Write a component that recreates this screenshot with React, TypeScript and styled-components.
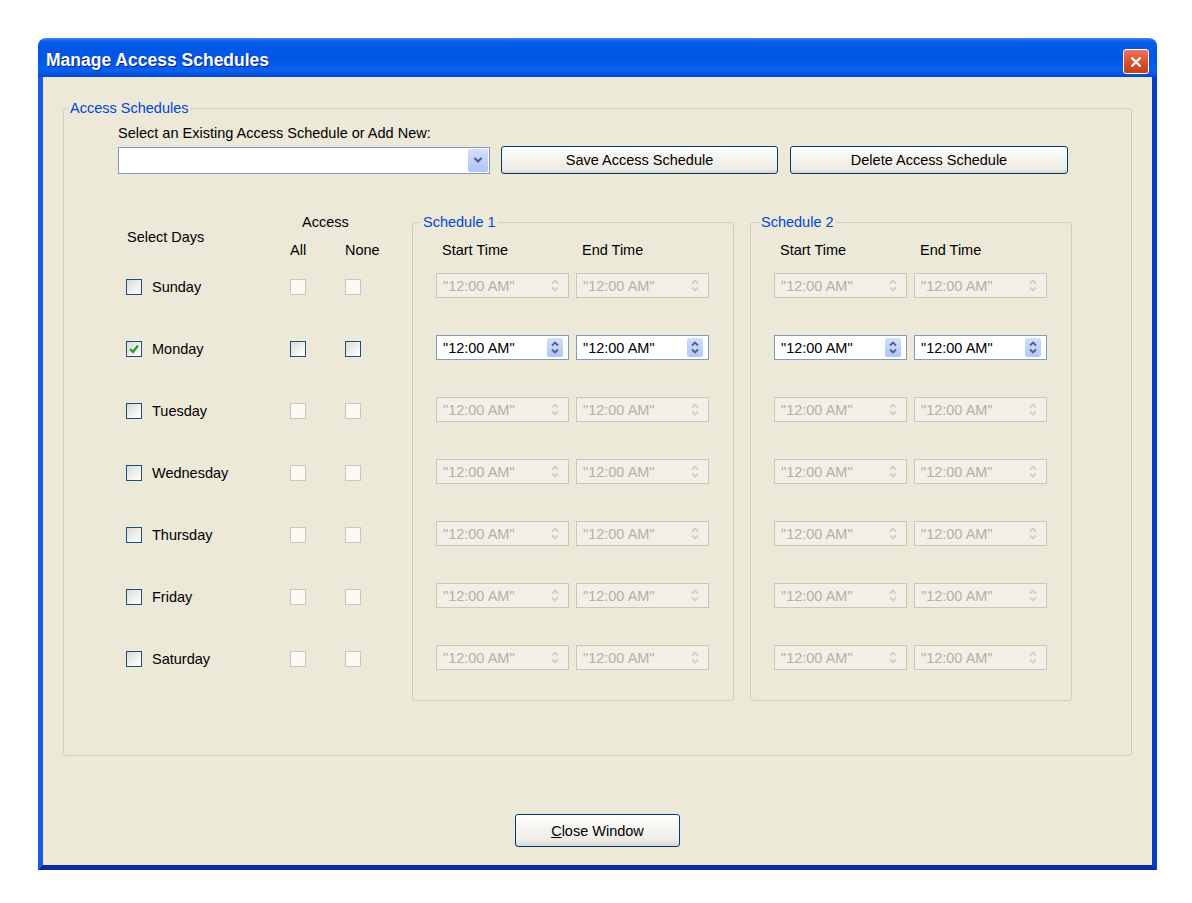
import React from "react";
import styled, { createGlobalStyle } from "styled-components";

const GlobalStyle = createGlobalStyle`
  html, body {
    margin: 0;
    padding: 0;
    background: #ffffff;
  }
  body {
    font-family: "Liberation Sans", Arial, sans-serif;
    font-size: 14.5px;
    color: #000;
  }
`;

const days = ["Sunday", "Monday", "Tuesday", "Wednesday", "Thursday", "Friday", "Saturday"];
const activeDay = "Monday";

const Page = styled.div`
  width: 1192px;
  height: 903px;
  padding: 38px 0 0 38px;
  box-sizing: border-box;
`;

const Window = styled.div`
  width: 1119px;
  height: 832px;
  display: flex;
  flex-direction: column;
  border-radius: 8px 8px 0 0;
  overflow: hidden;
`;

const TitleBar = styled.div`
  height: 39px;
  flex: none;
  display: flex;
  align-items: center;
  justify-content: space-between;
  padding: 5px 8px 0 8px;
  box-sizing: border-box;
  background: linear-gradient(
    180deg,
    #3d8ef8 0px,
    #0a5fe8 3px,
    #0157e6 10px,
    #0356e5 55%,
    #0862ef 82%,
    #0455e0 92%,
    #0a43c8 100%
  );
`;

const Title = styled.span`
  color: #fff;
  font-weight: bold;
  font-size: 17.5px;
  line-height: 20px;
  text-shadow: 1px 1px 0 #0a1e8c;
`;

const CloseBox = styled.span`
  width: 26px;
  height: 25px;
  box-sizing: border-box;
  border: 1px solid #fff;
  border-radius: 3px;
  background: linear-gradient(180deg, #e8775b 0%, #d8512f 55%, #c43e1c 100%);
  display: flex;
  align-items: center;
  justify-content: center;
  margin-top: 3px;
`;

const Body = styled.div`
  flex: 1;
  display: flex;
  flex-direction: column;
  align-items: stretch;
  background: #ece9d8;
  border-left: 5px solid #1a5ae0;
  border-right: 5px solid #0b3cc7;
  border-bottom: 5px solid #0a2aa6;
`;

const GroupBox = styled.fieldset<{ $height: number; $width?: number }>`
  margin: 0;
  padding: 0;
  min-width: 0;
  box-sizing: border-box;
  height: ${(p) => p.$height}px;
  ${(p) => (p.$width ? `width: ${p.$width}px;` : "")}
  border: 1px solid #d0d0bf;
  border-radius: 3px;
`;

const GroupLegend = styled.legend<{ $offset: number }>`
  margin-left: ${(p) => p.$offset}px;
  padding: 0 2px;
  color: #0046d5;
  font-size: 14.5px;
  line-height: 16px;
`;

const MainGroup = styled(GroupBox)`
  margin: 23px 20px 0 20px;
`;

const MainContent = styled.div`
  padding: 9px 0 0 54px;
`;

const Label = styled.div`
  line-height: 16px;
  white-space: nowrap;
`;

const ControlRow = styled.div`
  display: flex;
  align-items: center;
  height: 28px;
  margin-top: 5px;
`;

const Combo = styled.div`
  width: 372px;
  height: 27px;
  box-sizing: border-box;
  border: 1px solid #7f9db9;
  background: #fff;
  display: flex;
  justify-content: flex-end;
  align-items: center;
  padding-right: 1px;
  margin-right: 11px;
`;

const ComboButton = styled.span`
  width: 20px;
  height: 23px;
  border-radius: 2px;
  background: linear-gradient(180deg, #d3e0fd 0%, #bccff8 60%, #b0c6f6 100%);
  display: flex;
  align-items: center;
  justify-content: center;
`;

const Button = styled.button<{ $width: number }>`
  width: ${(p) => p.$width}px;
  height: 28px;
  box-sizing: border-box;
  border: 1px solid #003c74;
  border-radius: 3px;
  background: linear-gradient(180deg, #ffffff 0%, #f5f4ef 40%, #ecebe5 85%, #d8d4ca 100%);
  font-family: "Liberation Sans", Arial, sans-serif;
  font-size: 14.5px;
  color: #000;
  padding: 0;
  margin-right: 12px;
`;

const ScheduleArea = styled.div`
  display: flex;
  margin-top: 40px;
  height: 487px;
`;

const DaysPanel = styled.div`
  width: 294px;
  flex: none;
`;

const DaysHeader = styled.div`
  display: grid;
  grid-template-columns: 172px 55px 67px;
  grid-template-rows: 16px 12px 16px;
  line-height: 16px;
  height: 44px;
`;

const AccessTitle = styled.div`
  grid-column: 2 / 4;
  grid-row: 1;
  padding-left: 12px;
`;

const SelectDays = styled.div`
  grid-column: 1;
  grid-row: 1 / 4;
  align-self: center;
  padding-left: 9px;
  margin-top: 2px;
`;

const AccessCol = styled.div<{ $col: number }>`
  grid-row: 3;
  grid-column: ${(p) => p.$col};
`;

const DayRow = styled.div`
  display: grid;
  grid-template-columns: 172px 55px 67px;
  height: 62px;
  padding-top: 21px;
  box-sizing: border-box;
  align-items: start;
`;

const DayCell = styled.div`
  display: flex;
  align-items: center;
  gap: 10px;
  padding-left: 8px;
  line-height: 16px;
`;

const Box = styled.span<{ $disabled?: boolean }>`
  width: 16px;
  height: 16px;
  box-sizing: border-box;
  display: inline-flex;
  align-items: center;
  justify-content: center;
  border: 1px solid ${(p) => (p.$disabled ? "#cac8bb" : "#1c5180")};
  background: ${(p) =>
    p.$disabled ? "#fbfaf5" : "linear-gradient(135deg, #d9dbd5 0%, #f2f2ef 60%, #ffffff 100%)"};
`;

const ScheduleGroup = styled(GroupBox)`
  flex: none;
  margin-right: 16px;
`;

const ScheduleContent = styled.div`
  padding: 12px 0 0 23px;
`;

const TimeGrid = styled.div`
  display: grid;
  grid-template-columns: 133px 133px;
  column-gap: 7px;
`;

const TimeHeader = styled.div`
  line-height: 16px;
  padding-left: 6px;
`;

const TimeRow = styled.div`
  display: grid;
  grid-template-columns: 133px 133px;
  column-gap: 7px;
  height: 62px;
  padding-top: 15px;
  box-sizing: border-box;
  align-items: start;
`;

const Spinner = styled.div<{ $disabled?: boolean }>`
  height: 25px;
  box-sizing: border-box;
  display: flex;
  align-items: center;
  border: 1px solid ${(p) => (p.$disabled ? "#c9c7ba" : "#7f9db9")};
  background: ${(p) => (p.$disabled ? "#f1efe6" : "#fff")};
  color: ${(p) => (p.$disabled ? "#b4b1a3" : "#000")};
  padding: 0 5px 0 6px;
`;

const SpinValue = styled.span`
  flex: 1;
  white-space: nowrap;
  font-size: 14.5px;
`;

const SpinButton = styled.span<{ $disabled?: boolean }>`
  width: 16px;
  height: 19px;
  border-radius: 2px;
  display: flex;
  align-items: center;
  justify-content: center;
  background: ${(p) =>
    p.$disabled ? "transparent" : "linear-gradient(180deg, #d3e0fd 0%, #bccff8 60%, #b0c6f6 100%)"};
`;

const Footer = styled.div`
  display: flex;
  justify-content: center;
  margin-top: 58px;
`;

const CloseWindowButton = styled(Button)`
  height: 33px;
  margin-right: 0;
  u {
    text-decoration: underline;
  }
`;

const CheckMark = () => (
  <svg width="12" height="12" viewBox="0 0 12 12">
    <polyline points="2,6 5,9 10,2.5" fill="none" stroke="#21a121" strokeWidth="2.2" />
  </svg>
);

const Chevron = ({ color }: { color: string }) => (
  <svg width="10" height="8" viewBox="0 0 10 8">
    <polyline points="1.5,2 5,5.5 8.5,2" fill="none" stroke={color} strokeWidth="2.2" />
  </svg>
);

const SpinArrows = ({ color }: { color: string }) => (
  <svg width="10" height="15" viewBox="0 0 10 15">
    <polyline points="2,5.5 5,2.5 8,5.5" fill="none" stroke={color} strokeWidth="1.8" />
    <polyline points="2,9.5 5,12.5 8,9.5" fill="none" stroke={color} strokeWidth="1.8" />
  </svg>
);

const TimeSpinner = ({ disabled }: { disabled: boolean }) => (
  <Spinner $disabled={disabled}>
    <SpinValue>"12:00 AM"</SpinValue>
    <SpinButton $disabled={disabled}>
      <SpinArrows color={disabled ? "#d2d0c4" : "#4d6185"} />
    </SpinButton>
  </Spinner>
);

const Schedule = ({ title }: { title: string }) => (
  <ScheduleGroup $height={487} $width={322}>
    <GroupLegend $offset={8}>{title}</GroupLegend>
    <ScheduleContent>
      <TimeGrid>
        <TimeHeader>Start Time</TimeHeader>
        <TimeHeader>End Time</TimeHeader>
      </TimeGrid>
      {days.map((d) => (
        <TimeRow key={d}>
          <TimeSpinner disabled={d !== activeDay} />
          <TimeSpinner disabled={d !== activeDay} />
        </TimeRow>
      ))}
    </ScheduleContent>
  </ScheduleGroup>
);

export default function App() {
  return (
    <Page>
      <GlobalStyle />
      <Window>
        <TitleBar>
          <Title>Manage Access Schedules</Title>
          <CloseBox>
            <svg width="14" height="14" viewBox="0 0 14 14">
              <path d="M2.5 2.5 L11.5 11.5 M11.5 2.5 L2.5 11.5" stroke="#fff" strokeWidth="2.4" />
            </svg>
          </CloseBox>
        </TitleBar>
        <Body>
          <MainGroup $height={656}>
            <GroupLegend $offset={4}>Access Schedules</GroupLegend>
            <MainContent>
              <Label>Select an Existing Access Schedule or Add New:</Label>
              <ControlRow>
                <Combo>
                  <ComboButton>
                    <Chevron color="#4d6185" />
                  </ComboButton>
                </Combo>
                <Button $width={277}>Save Access Schedule</Button>
                <Button $width={278}>Delete Access Schedule</Button>
              </ControlRow>
              <ScheduleArea>
                <DaysPanel>
                  <DaysHeader>
                    <SelectDays>Select Days</SelectDays>
                    <AccessTitle>Access</AccessTitle>
                    <AccessCol $col={2}>All</AccessCol>
                    <AccessCol $col={3}>None</AccessCol>
                  </DaysHeader>
                  {days.map((d) => {
                    const on = d === activeDay;
                    return (
                      <DayRow key={d}>
                        <DayCell>
                          <Box>{on && <CheckMark />}</Box>
                          <span>{d}</span>
                        </DayCell>
                        <div>
                          <Box $disabled={!on} />
                        </div>
                        <div>
                          <Box $disabled={!on} />
                        </div>
                      </DayRow>
                    );
                  })}
                </DaysPanel>
                <Schedule title="Schedule 1" />
                <Schedule title="Schedule 2" />
              </ScheduleArea>
            </MainContent>
          </MainGroup>
          <Footer>
            <CloseWindowButton $width={165}>
              <u>C</u>lose Window
            </CloseWindowButton>
          </Footer>
        </Body>
      </Window>
    </Page>
  );
}
